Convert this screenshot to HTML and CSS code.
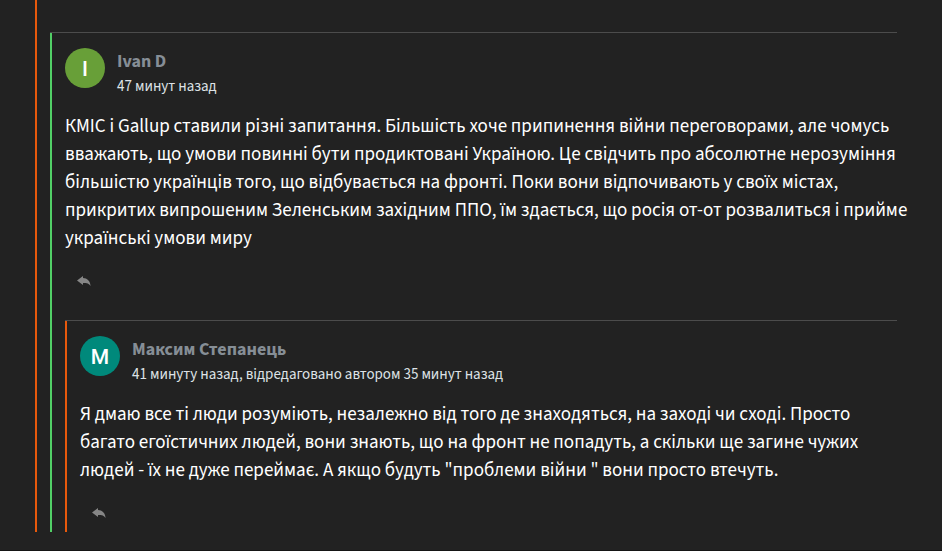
FILE: index.html
```
<!DOCTYPE html>
<html lang="uk">
<head>
<meta charset="utf-8">
<meta name="viewport" content="width=device-width, initial-scale=1">
<title>Коментарі</title>
<link rel="stylesheet" href="styles.css">
</head>
<body>
<main class="comments">
  <div class="thread">
    <article class="comment comment-green">
      <header class="comment-head">
        <svg class="avatar" viewBox="0 0 40 40" aria-hidden="true"><circle cx="20" cy="20" r="20" fill="#689f38"/><text x="20" y="28" class="avatar-letter">I</text></svg>
        <div class="meta">
          <a class="author" href="#">Ivan D</a>
          <time class="date">47 минут назад</time>
        </div>
      </header>
      <p class="body">КМІС і Gallup ставили різні запитання. Більшість хоче припинення війни переговорами, але чомусь вважають, що умови повинні бути продиктовані Україною. Це свідчить про абсолютне нерозуміння більшістю українців того, що відбувається на фронті. Поки вони відпочивають у своїх містах, прикритих випрошеним Зеленським західним ППО, їм здається, що росія от-от розвалиться і прийме українські умови миру</p>
      <button class="reply" type="button" aria-label="Відповісти"><svg viewBox="0 0 14 10" aria-hidden="true"><path d="M0 4.500 6 0v2C10 2 13.500 5 13.500 10 12 7.500 10 7 6 7v2z"/></svg></button>

      <article class="comment comment-orange">
        <header class="comment-head">
          <svg class="avatar" viewBox="0 0 40 40" aria-hidden="true"><circle cx="20" cy="20" r="20" fill="#00897b"/><text x="20" y="28" class="avatar-letter">M</text></svg>
          <div class="meta">
            <a class="author" href="#">Максим Степанець</a>
            <time class="date">41 минуту назад, відредаговано автором 35 минут назад</time>
          </div>
        </header>
        <p class="body">Я дмаю все ті люди розуміють, незалежно від того де знаходяться, на заході чи сході. Просто багато егоїстичних людей, вони знають, що на фронт не попадуть, а скільки ще загине чужих людей - їх не дуже переймає. А якщо будуть "проблеми війни " вони просто втечуть.</p>
        <button class="reply" type="button" aria-label="Відповісти"><svg viewBox="0 0 14 10" aria-hidden="true"><path d="M0 4.500 6 0v2C10 2 13.500 5 13.500 10 12 7.500 10 7 6 7v2z"/></svg></button>
      </article>
    </article>
  </div>
</main>
</body>
</html>
```
FILE: styles.css
```
* {
  box-sizing: border-box;
}

body {
  margin: 0;
  background: #222;
  color: #fff;
  font-family: "Source Sans Pro", "Source Sans 3", "Noto Sans CJK SC", "Noto Sans", sans-serif;
}

.comments {
  padding: 0 45px 18px 35px;
  border-bottom: 1px solid #151515;
}

.thread {
  padding: 32px 0 0 13px;
  border-left: 2px solid #e8590c;
}

.comment {
  position: relative;
  padding: 15px 0 0 15px;
  border-top: 1px solid #4c4c4c;
}

.comment::before {
  content: "";
  position: absolute;
  top: 0;
  bottom: 0;
  left: 0;
  width: 2px;
  background: #51cf66;
}

.comment-orange {
  padding-bottom: 7px;
}

.comment-orange::before {
  background: #e8590c;
}

.comment-head {
  display: flex;
  gap: 12px;
  height: 48px;
}

.avatar {
  flex: none;
  width: 40px;
  height: 40px;
}

.avatar-letter {
  fill: #fff;
  font: 500 21px Roboto, sans-serif;
  text-anchor: middle;
}

.meta {
  display: flex;
  flex-direction: column;
  padding-top: 1px;
}

.author {
  color: #868e96;
  font-size: 18px;
  font-weight: 700;
  line-height: 26px;
  text-decoration: none;
}

.date {
  color: #dee2e6;
  font-size: 15px;
  line-height: 24px;
}

.body {
  margin: 17px -12px 0 0;
  font-size: 19px;
  line-height: 28px;
}

.reply {
  display: block;
  margin: 16px 0 27px;
  padding: 7px 12px;
  border: 0;
  background: none;
  cursor: pointer;
}

.reply svg {
  display: block;
  width: 14px;
  height: 10px;
  fill: #868686;
}

.comment-orange .reply {
  margin-bottom: 0;
}
```
